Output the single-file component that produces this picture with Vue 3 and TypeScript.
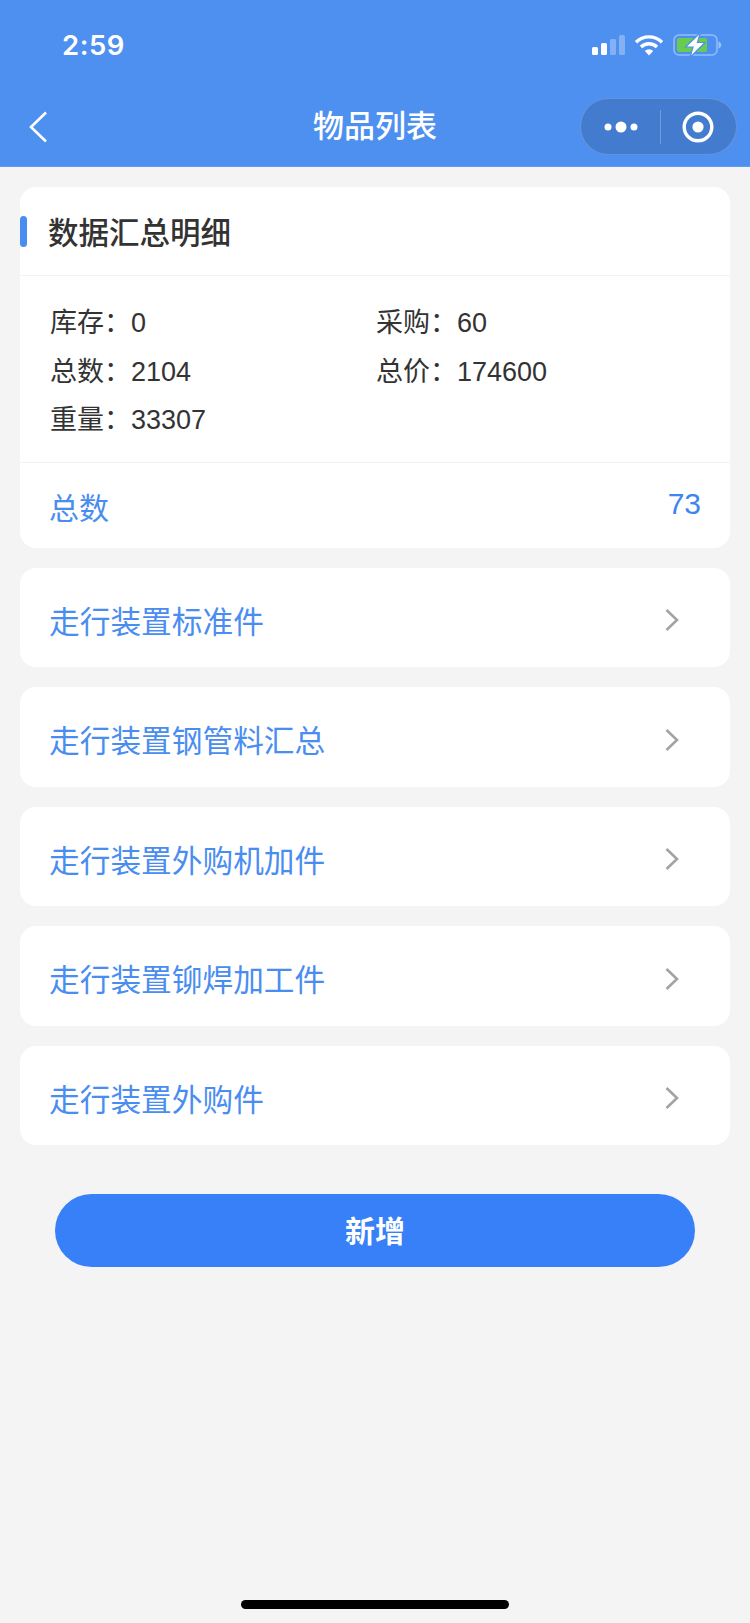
<script setup lang="ts">
const stats = [
  { label: '库存', value: '0' },
  { label: '采购', value: '60' },
  { label: '总数', value: '2104' },
  { label: '总价', value: '174600' },
  { label: '重量', value: '33307' },
]

const items = ['走行装置标准件', '走行装置钢管料汇总', '走行装置外购机加件', '走行装置铆焊加工件', '走行装置外购件']
</script>

<template>
  <div class="page">
    <header class="header">
      <div class="status-bar">
        <span class="time">2:59</span>
        <div class="status-icons">
          <svg width="34" height="22" viewBox="0 0 34 22">
            <rect x="1" y="13" width="6" height="8" rx="1.5" fill="#fff" />
            <rect x="10" y="9" width="6" height="12" rx="1.5" fill="#fff" />
            <rect x="19" y="5" width="6" height="16" rx="1.5" fill="#fff" fill-opacity="0.3" />
            <rect x="28" y="1" width="6" height="20" rx="1.5" fill="#fff" fill-opacity="0.3" />
          </svg>
          <svg class="wifi" width="30" height="22" viewBox="0 0 30 22" fill="none" stroke="#fff" stroke-width="3.4">
            <path d="M2 8.2a18.5 18.5 0 0 1 26 0" />
            <path d="M7 13a11.5 11.5 0 0 1 16 0" />
            <path d="M15 21.5l-4.2-4.6a6 6 0 0 1 8.4 0z" fill="#fff" stroke="none" />
          </svg>
          <svg class="battery" width="49" height="26" viewBox="0 0 49 26">
            <rect x="1" y="3" width="43" height="20" rx="5" fill="none" stroke="#fff" stroke-opacity="0.4" stroke-width="1.5" />
            <rect x="4" y="6" width="30" height="14" rx="2" fill="#69cb4f" />
            <path d="M45.5 9.5c1.8.6 2.8 2 2.8 3.5s-1 2.9-2.8 3.5z" fill="#fff" fill-opacity="0.45" />
            <path d="M27.5 0.5L12.5 15h7.5l-3 10.5L32 10.5h-7.6z" fill="#fff" stroke="#4e90f0" stroke-width="1.2" />
          </svg>
        </div>
      </div>
      <div class="nav-bar">
        <svg class="back" width="20" height="32" viewBox="0 0 20 32" fill="none" stroke="#fff" stroke-width="2.6">
          <path d="M18 1.5L3 16l15 14.5" />
        </svg>
        <h1 class="nav-title">物品列表</h1>
        <div class="capsule">
          <svg width="34" height="14" viewBox="0 0 34 14" fill="#fff">
            <circle cx="4" cy="7" r="3.5" />
            <circle cx="17" cy="7" r="5.5" />
            <circle cx="30" cy="7" r="3.5" />
          </svg>
          <span class="capsule-line"></span>
          <svg width="32" height="32" viewBox="0 0 32 32">
            <circle cx="16" cy="16" r="13.8" fill="none" stroke="#fff" stroke-width="3.4" />
            <circle cx="16" cy="16" r="5.6" fill="#fff" />
          </svg>
        </div>
      </div>
    </header>

    <main class="content">
      <section class="card summary">
        <div class="summary-head">
          <span class="marker"></span>
          <h2 class="summary-title">数据汇总明细</h2>
        </div>
        <div class="stats">
          <div v-for="stat in stats" :key="stat.label" class="stat">
            <span class="stat-label">{{ stat.label }}：</span><span>{{ stat.value }}</span>
          </div>
        </div>
        <div class="total">
          <span class="total-label">总数</span>
          <span class="total-value">73</span>
        </div>
      </section>

      <section v-for="item in items" :key="item" class="card row">
        <span class="row-label">{{ item }}</span>
        <svg class="chevron" width="16" height="24" viewBox="0 0 16 24" fill="none" stroke="#a3a3a3" stroke-width="2.6">
          <path d="M2.5 2l10.5 10L2.5 22" />
        </svg>
      </section>

      <button type="button" class="add-btn">新增</button>
    </main>

    <div class="home-bar"></div>
  </div>
</template>

<style scoped>
.page {
  position: relative;
  width: 750px;
  height: 1623px;
  overflow: hidden;
  background: #f4f4f4;
  font-family: 'Liberation Sans', 'Noto Sans CJK SC', sans-serif;
}

.header {
  height: 167px;
  background: #4e90f0;
  box-sizing: border-box;
  border-bottom: 1px solid #5c9cf6;
  color: #fff;
}

.status-bar {
  height: 88px;
  display: flex;
  align-items: center;
  justify-content: space-between;
  padding: 2px 28px 0 62px;
  box-sizing: border-box;
}

.time {
  font-family: 'Inter', sans-serif;
  font-size: 27.5px;
  font-weight: 600;
  letter-spacing: 0.5px;
}

.status-icons {
  display: flex;
  align-items: center;
  gap: 9px;
}

.nav-bar {
  position: relative;
  height: 78px;
  display: flex;
  align-items: center;
  justify-content: center;
}

.back {
  position: absolute;
  left: 28px;
  top: 23px;
}

.nav-title {
  margin: 0;
  font-size: 31px;
  font-weight: 500;
  line-height: 78px;
}

.capsule {
  position: absolute;
  right: 13px;
  top: 10px;
  width: 157px;
  height: 57px;
  box-sizing: border-box;
  border: 1px solid rgba(255, 255, 255, 0.18);
  border-radius: 29px;
  background: rgba(0, 0, 0, 0.14);
  display: flex;
  align-items: center;
  padding: 0 22px 0 23px;
  justify-content: space-between;
}

.capsule-line {
  width: 1px;
  height: 34px;
  background: rgba(255, 255, 255, 0.25);
}

.content {
  display: flex;
  flex-direction: column;
  gap: 20px;
  padding: 20px 20px 0;
}

.card {
  background: #fff;
  border-radius: 16px;
}

.summary-head {
  position: relative;
  height: 88px;
  display: flex;
  align-items: center;
  padding-left: 28px;
  border-bottom: 1px solid #f1f3f6;
}

.marker {
  position: absolute;
  left: 0;
  top: 29px;
  width: 7px;
  height: 31px;
  border-radius: 4px;
  background: #4a8df0;
}

.summary-title {
  margin: 0;
  font-size: 30.5px;
  font-weight: 500;
  color: #333;
}

.stats {
  display: grid;
  grid-template-columns: 326px 1fr;
  grid-auto-rows: 48.5px;
  padding: 23px 30px 17px;
  border-bottom: 1px solid #f1f3f6;
  font-size: 27px;
  color: #333;
}

.stat {
  display: flex;
  align-items: baseline;
  line-height: 48.5px;
  white-space: pre;
}

.stat-label {
  width: 81px;
  font-size: 27px;
}

.total {
  height: 85px;
  display: flex;
  align-items: center;
  justify-content: space-between;
  padding: 1px 29px 0 29px;
  box-sizing: border-box;
  color: #4a8df0;
}

.total-label {
  font-size: 30px;
}

.total-value {
  font-size: 30px;
  margin-top: -4px;
  color: #3c86f2;
}

.row {
  height: 99.5px;
  display: flex;
  align-items: center;
  justify-content: space-between;
  padding: 4px 50px 0 29px;
  box-sizing: border-box;
}

.row-label {
  font-size: 30.7px;
  color: #4a8df0;
}

.chevron {
  margin-top: 2px;
}

.add-btn {
  align-self: center;
  width: 640px;
  height: 73px;
  margin-top: 28.5px;
  padding: 0 0 2px;
  border: none;
  border-radius: 37px;
  background: #3780f8;
  color: #fff;
  font-family: inherit;
  font-size: 30px;
  font-weight: 700;
}

.home-bar {
  position: absolute;
  left: 241px;
  bottom: 14px;
  width: 268px;
  height: 9px;
  border-radius: 5px;
  background: #000;
}
</style>
